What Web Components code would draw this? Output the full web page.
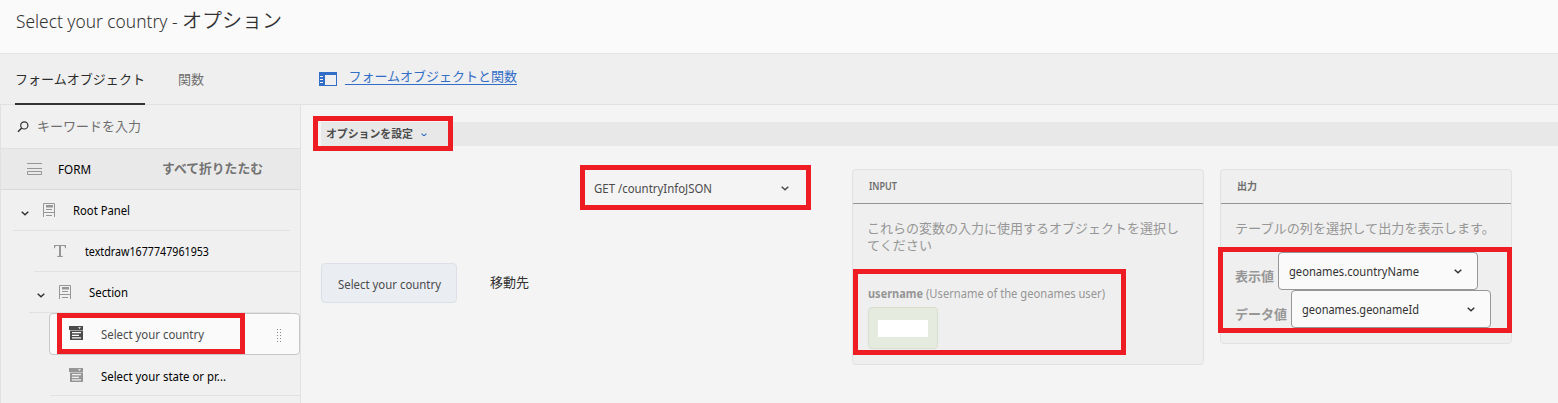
<!DOCTYPE html>
<html lang="ja">
<head>
<meta charset="utf-8">
<title>Select your country - オプション</title>
<style>
html,body{margin:0;height:100%;overflow:hidden;background:#f4f4f4;font-family:"Noto Sans","Noto Sans CJK JP",sans-serif}
</style>
</head>
<body>
<options-page></options-page>
<script>
const define = (name, html, ready) => customElements.define(name, class extends HTMLElement {
  connectedCallback() {
    if (this.shadowRoot) return;
    const t = document.createElement('template');
    t.innerHTML = html;
    this.attachShadow({ mode: 'open' }).appendChild(t.content.cloneNode(true));
    if (ready) ready(this, this.shadowRoot);
  }
});

/* one line of text condensed to the width given in "w" */
define('ui-text', `<style>
:host{display:block;flex:none;white-space:pre;line-height:20px;height:20px;font-size:13px}
span{display:inline-block;transform-origin:0 50%}
</style><span><slot></slot></span>`, (el, root) => {
  const s = root.querySelector('span');
  if (el.hasAttribute('size')) el.style.fontSize = el.getAttribute('size') + 'px';
  const w = +el.getAttribute('w');
  if (w) {
    el.style.width = w + 'px';
    s.style.transform = 'scaleX(' + w / s.getBoundingClientRect().width + ')';
  }
});

const ICONS = {
  search: [12, 12, '<circle cx="7.3" cy="4.4" r="3.6" fill="none" stroke="currentColor" stroke-width="1.2"/><path d="M4.7 7 1 10.8" stroke="currentColor" stroke-width="1.5"/>'],
  form: [15, 12, '<path d="M0 .5h15M0 5.5h15M.5 8.5h14v3h-14z" fill="none" stroke="currentColor"/>'],
  panel: [14, 14, '<path d="M1.500 14V.5h11V14M4 6.500h6M1.500 9.500h11M4 12.500h6" fill="none" stroke="currentColor"/><path d="M4 2h7v2.500H4z" fill="currentColor"/>'],
  text: [12, 12, '<path d="M0 0h12v3.200h-.9L10.400 1H7v9.800l1.800.4V12H3.200v-.8L5 10.800V1H1.600L.9 3.200H0z" fill="currentColor"/>'],
  drop: [14, 14, '<path fill-rule="evenodd" d="M0 0h14v4H0zM9 1.300l1.500 1.700L12 1.300z" fill="currentColor"/><path fill-rule="evenodd" d="M1 4.500h13V14H1zM3 6v1.200h9V6zm0 2.700v1.200h7V8.700zm0 2.600v1.200h9v-1.200z" fill="currentColor"/>'],
  chevron: [8, 5, '<path d="M.7.8 4 3.800 7.300.8" fill="none" stroke="currentColor" stroke-width="1.500"/>'],
  rail: [18, 14, '<path fill-rule="evenodd" d="M0 0h18v14H0zM6 3v10h11V3zM1 4v1h3V4zm0 3v1h3V7zm0 3v1h3v-1z" fill="currentColor"/>'],
  grip: [5, 14, '<path d="M1.500 0v14M4.500 0v14" stroke="currentColor" stroke-dasharray="1 2"/>']
};
define('ui-icon', `<style>:host{display:block;flex:none}svg{display:block}</style><svg></svg>`, (el, root) => {
  const [w, h, body] = ICONS[el.getAttribute('name')];
  const s = root.querySelector('svg'), k = +el.getAttribute('scale') || 1;
  s.setAttribute('viewBox', `0 0 ${w} ${h}`);
  s.setAttribute('width', w * k); s.setAttribute('height', h * k);
  s.innerHTML = body;
});

define('red-frame', `<style>:host{position:absolute;box-sizing:border-box;border:5px solid #ee1c23;pointer-events:none;z-index:5}</style>`);

define('page-header', `<style>
:host{display:flex;box-sizing:border-box;height:54px;padding:10px 16px 0;background:#fafafa;border-bottom:1px solid #e4e4e4;color:#323232;font-weight:300}
</style><ui-text size="18.500" w="166" style="margin-top:1px">Select your country - </ui-text><ui-text size="20" w="100" style="margin-top:1px;font-weight:350">オプション</ui-text>`);

define('tab-bar', `<style>
:host{display:flex;box-sizing:border-box;height:51px;background:#efefef;border-bottom:1px solid #e1e1e1;padding-left:15px;color:#707070}
.tab{box-sizing:border-box;height:51px;padding-top:15px;border-bottom:2px solid transparent}
.on{color:#2c2c2c;border-color:#323232}
.fn{margin-left:33px;width:141px}
.link{display:flex;color:#326ec8;padding-top:12px}
.link ui-text{margin-left:8px}
u{text-underline-offset:3px}
</style>
<div class="tab on"><ui-text w="130">フォームオブジェクト</ui-text></div>
<div class="tab fn"><ui-text w="26">関数</ui-text></div>
<div class="link"><ui-icon name="rail" style="margin-top:6px"></ui-icon><ui-text w="172"><u> フォームオブジェクトと関数</u></ui-text></div>`);

define('tree-row', `<style>
:host{display:block;box-sizing:border-box;height:41px;color:#000}
.r{display:flex;align-items:center;box-sizing:border-box;height:41px;border-bottom:1px solid #e1e1e1;margin-left:var(--in,0);margin-right:var(--out,0);padding-left:var(--pad,0)}
:host([selected]) .r{background:#fafafa;border:1px solid #c8c8c8;border-radius:4px;height:42px;color:#4b4b4b;margin-right:0}
:host([selected]){height:42px}
</style><div class="r"><slot></slot></div>`);

define('object-tree', `<style>
:host{display:block;box-sizing:border-box;width:301px;height:298px;background:#f0f0f0;border:solid #e1e1e1;border-width:0 1px}
.search{display:flex;box-sizing:border-box;height:44px;border-bottom:1px solid #e1e1e1;padding:12px 0 0 16px;color:#6e6e6e}
.search ui-icon{color:#323232;margin-top:4px}
.search ui-text{margin-left:8px;margin-top:-1px}
.form{display:flex;box-sizing:border-box;height:41px;background:#e9e9e9;border-bottom:1px solid #dadada;padding:10px 0 0 26px}
.g{color:#969696}.d{color:#4b4b4b}.c{color:#323232}
</style>
<div class="search"><ui-icon name="search"></ui-icon><ui-text w="104">キーワードを入力</ui-text></div>
<div class="form"><ui-icon class="g" name="form" style="margin-top:4px"></ui-icon><ui-text w="33" style="margin-left:16px;color:#000">FORM</ui-text><ui-text w="101" style="margin-left:71px;color:#737373;font-weight:700;margin-top:-1px">すべて折りたたむ</ui-text></div>
<tree-row style="--in:12px;--out:10px;--pad:8px"><ui-icon class="c" name="chevron" style="margin-top:6px"></ui-icon><ui-icon class="g" name="panel" style="margin-left:13px"></ui-icon><ui-text w="57" style="margin-left:17px">Root Panel</ui-text></tree-row>
<tree-row style="--in:33px;--pad:20px"><ui-icon class="g" name="text"></ui-icon><ui-text w="124" style="margin-left:19px">textdraw1677747961953</ui-text></tree-row>
<tree-row style="--in:28px;--out:10px;--pad:8px"><ui-icon class="c" name="chevron" style="margin-top:6px"></ui-icon><ui-icon class="g" name="panel" style="margin-left:13px"></ui-icon><ui-text w="39" style="margin-left:17px">Section</ui-text></tree-row>
<tree-row selected style="--in:48px;--pad:19px"><ui-icon class="d" name="drop" style="margin-top:-2px"></ui-icon><ui-text w="103" style="margin-left:18px;margin-top:-1px">Select your country</ui-text><ui-icon name="grip" style="margin-left:72px;margin-top:4px;color:#888"></ui-icon></tree-row>
<tree-row style="--in:49px;--pad:19px"><ui-icon class="g" name="drop"></ui-icon><ui-text w="125" style="margin-left:18px;margin-top:1px">Select your state or pr...</ui-text></tree-row>`);

define('info-card', `<style>
:host{display:block;box-sizing:border-box;background:#efefef;border:1px solid #e1e1e1;border-radius:4px;color:#969696}
header{box-sizing:border-box;height:34px;border-bottom:1px solid #959595;padding:6px 16px 0;color:#6e6e6e;font-weight:600}
section{padding:14px 0 0 14px}
</style><header><slot name="title"></slot></header><section><slot></slot></section>`);

define('drop-select', `<style>
:host{display:flex;align-items:center;justify-content:space-between;box-sizing:border-box;width:200px;height:38px;border:1px solid #969696;border-radius:4px;background:#fafafa;padding:0 15px 0 10px;color:#323232}
:host([quiet]){border-color:transparent;background:none;color:#4b4b4b}
</style><slot></slot><ui-icon name="chevron"></ui-icon>`);

define('options-editor', `<style>
:host{display:block;flex:1;padding-top:17px}
.bar{display:flex;align-items:center;height:24px;background:#e8e8e8;margin-left:20px;padding-left:5px;color:#4b4b4b;font-weight:700;box-sizing:border-box}
.bar ui-icon{color:#326ec8;margin:1px 0 0 8px}
.row{display:flex;align-items:flex-start;margin-top:23px;padding-left:20px}
.obj{display:flex;justify-content:center;box-sizing:border-box;width:136px;height:40px;margin-top:94px;padding-top:10px;background:#eaeef3;border:1px solid #dce0e6;border-radius:4px;color:#4b4b4b}
.chip{display:flex;align-items:center;justify-content:center;box-sizing:border-box;width:70px;height:42px;margin-left:1px;background:#e6ebe0;border:1px solid #d8ddd2;border-radius:4px}
.chip i{width:50px;height:17px;background:#fff}
.line{display:flex}
</style>
<div class="bar"><ui-text size="11" w="87">オプションを設定</ui-text><ui-icon name="chevron" scale=".75"></ui-icon></div>
<div class="row">
  <div class="obj"><ui-text w="103">Select your country</ui-text></div>
  <ui-text w="39" style="margin:103px 0 0 33px;color:#323232">移動先</ui-text>
  <drop-select quiet style="width:219px;margin-left:54px;margin-right:1px;padding-right:12px"><ui-text w="118">GET /countryInfoJSON</ui-text></drop-select>
  <info-card style="width:352px;height:196px;margin-left:49px">
    <ui-text slot="title" size="10.500" w="28">INPUT</ui-text>
    <ui-text w="312" style="height:17px">これらの変数の入力に使用するオブジェクトを選択し</ui-text>
    <ui-text w="65">てください</ui-text>
    <div class="line" style="margin-top:28px"><ui-text w="55" style="font-weight:700;margin-left:1px">username</ui-text><ui-text w="179" style="margin-left:3px">(Username of the geonames user)</ui-text></div>
    <div class="chip" style="margin-top:4px"><i></i></div>
  </info-card>
  <info-card style="width:292px;height:175px;margin-left:16px">
    <ui-text slot="title" size="10" w="20">出力</ui-text>
    <ui-text w="260">テーブルの列を選択して出力を表示します。</ui-text>
    <div class="line" style="margin-top:14px"><ui-text w="39" style="font-weight:700;margin:14px 4px 0 0">表示値</ui-text><drop-select><ui-text w="130">geonames.countryName</ui-text></drop-select></div>
    <div class="line"><ui-text w="52" style="font-weight:700;margin:14px 4px 0 0">データ値</ui-text><drop-select><ui-text w="117">geonames.geonameId</ui-text></drop-select></div>
  </info-card>
</div>`);

define('options-page', `<style>
:host{display:block;position:relative;width:1558px;height:403px;overflow:hidden;background:#f4f4f4}
main{display:flex}
</style>
<page-header></page-header><tab-bar></tab-bar>
<main><object-tree></object-tree><options-editor></options-editor></main>
<red-frame style="left:313px;top:116px;width:140px;height:35px"></red-frame>
<red-frame style="left:580px;top:165px;width:231px;height:45px"></red-frame>
<red-frame style="left:57px;top:313px;width:188px;height:41px"></red-frame>
<red-frame style="left:853px;top:269px;width:273px;height:86px"></red-frame>
<red-frame style="left:1218px;top:247px;width:294px;height:86px"></red-frame>`);
</script>
</body>
</html>
